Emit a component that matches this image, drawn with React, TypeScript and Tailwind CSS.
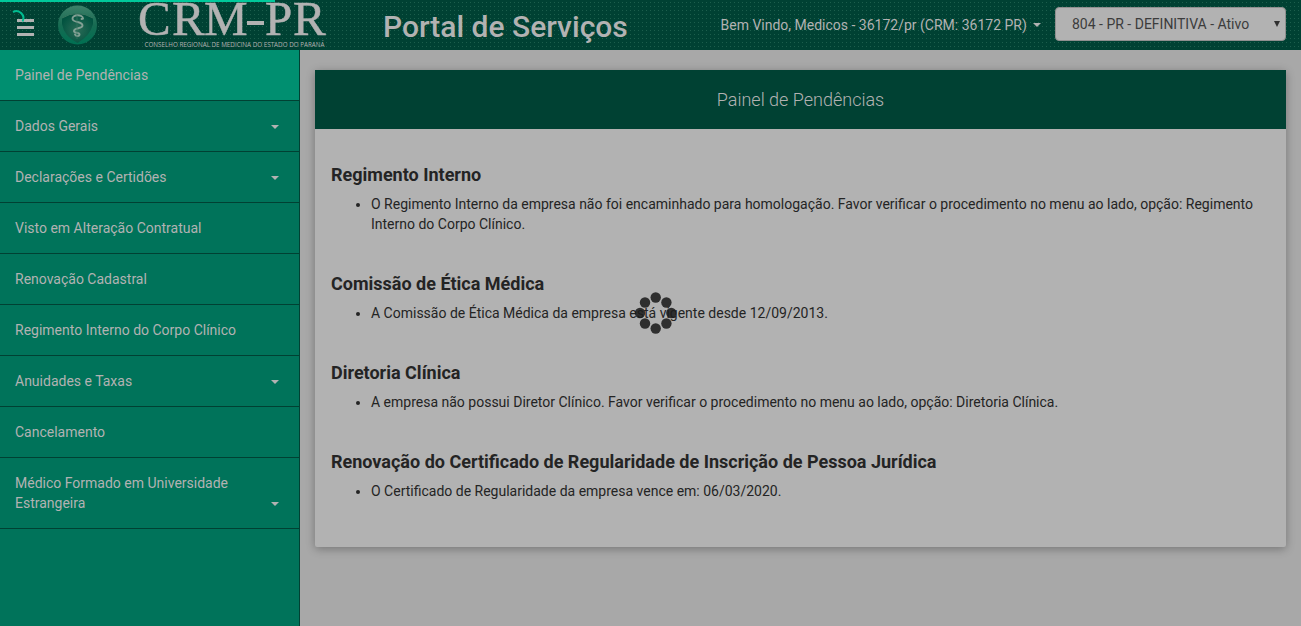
import React from "react";

type MenuItem = { label: string; caret?: boolean; active?: boolean };

const menu: MenuItem[] = [
  { label: "Painel de Pendências", active: true },
  { label: "Dados Gerais", caret: true },
  { label: "Declarações e Certidões", caret: true },
  { label: "Visto em Alteração Contratual" },
  { label: "Renovação Cadastral" },
  { label: "Regimento Interno do Corpo Clínico" },
  { label: "Anuidades e Taxas", caret: true },
  { label: "Cancelamento" },
  { label: "Médico Formado em Universidade Estrangeira", caret: true },
];

const sections = [
  {
    title: "Regimento Interno",
    text: "O Regimento Interno da empresa não foi encaminhado para homologação. Favor verificar o procedimento no menu ao lado, opção: Regimento Interno do Corpo Clínico.",
  },
  { title: "Comissão de Ética Médica", text: "A Comissão de Ética Médica da empresa está vigente desde 12/09/2013." },
  {
    title: "Diretoria Clínica",
    text: "A empresa não possui Diretor Clínico. Favor verificar o procedimento no menu ao lado, opção: Diretoria Clínica.",
  },
  {
    title: "Renovação do Certificado de Regularidade de Inscrição de Pessoa Jurídica",
    text: "O Certificado de Regularidade da empresa vence em: 06/03/2020.",
  },
];

function Caret() {
  return <span className="inline-block h-0 w-0 border-x-4 border-t-4 border-x-transparent border-t-[#b2b2b2]" />;
}

function Seal() {
  return (
    <svg className="ml-[23px] h-10 w-10 shrink-0" viewBox="0 0 40 40">
      <defs>
        <linearGradient id="rim" x1="0" y1="0" x2="0" y2="1">
          <stop offset="0" stopColor="#3d8069" />
          <stop offset=".5" stopColor="#176b52" />
          <stop offset="1" stopColor="#007052" />
        </linearGradient>
        <radialGradient id="core" cx=".5" cy=".55" r=".55">
          <stop offset="0" stopColor="#2b6c57" />
          <stop offset="1" stopColor="#025340" />
        </radialGradient>
      </defs>
      <ellipse cx="20.5" cy="20" rx="19.5" ry="19.5" fill="url(#rim)" />
      <path d="M5 13Q20 4 36 13L36 19Q33 31 20.5 38Q7 31 5 19Z" fill="url(#core)" />
      <path d="M5 13Q20 4 36 13" fill="none" stroke="#37765f" strokeWidth="1" />
      <path
        d="M15.5 14C15 9 26 9 26 13.5L24.5 14M15.5 14C16 18 25.5 16 25.5 20.5C25.5 24 17 22.5 17 26C17 28.5 22.5 27 22.5 29.5C22.5 32 18.5 31 18 29.5"
        fill="none"
        stroke="#83a094"
        strokeWidth="1.9"
        strokeLinecap="round"
      />
      <path d="M20 10V34" stroke="#3b7563" strokeWidth=".7" />
    </svg>
  );
}

function Logo() {
  return (
    <svg className="ml-[41px] h-[50px] w-[190px] shrink-0 overflow-visible" viewBox="0 0 190 50" fill="#b2b2b2">
      <text y="35.3" fontSize="49" stroke="#b2b2b2" strokeWidth=".5" className="font-['Liberation_Serif',serif]">
        <tspan x="0">C</tspan>
        <tspan x="34">R</tspan>
        <tspan x="66">M</tspan>
        <tspan x="127">P</tspan>
        <tspan x="155">R</tspan>
      </text>
      <rect x="109" y="21" width="17" height="4" />
      <text x="6.5" y="47" fontSize="6.5" textLength="180" lengthAdjust="spacingAndGlyphs" className="font-['Open_Sans',sans-serif]">
        CONSELHO REGIONAL DE MEDICINA DO ESTADO DO PARANÁ
      </text>
    </svg>
  );
}

export default function App() {
  return (
    <div className="relative flex h-[626px] flex-col overflow-hidden bg-[#a8a8a8] font-['Roboto',sans-serif] text-sm leading-5 text-[#242424]">
      <header className="flex h-[50px] shrink-0 items-center bg-[#004133] bg-[linear-gradient(90deg,#004133_3px,transparent_3px),linear-gradient(#004133_3px,#1c5e4c_3px)] bg-[size:4px_4px] bg-[position:-1px_-1px] text-[#b2b2b2]">
        <div className="ml-[17px] flex w-[17px] flex-col gap-1 pt-1">
          <span className="h-[3px] bg-[#b2b2b2]" />
          <span className="h-[3px] bg-[#b2b2b2]" />
          <span className="h-[3px] bg-[#b2b2b2]" />
        </div>
        <Seal />
        <Logo />
        <h1 className="ml-[55px] w-[337.5px] shrink-0 pt-[2px] text-[30px] leading-[33px] font-medium">Portal de Serviços</h1>
        <div className="flex shrink-0 items-center gap-[6px]">
          <span>Bem Vindo, Medicos - 36172/pr (CRM: 36172 PR)</span>
          <Caret />
        </div>
        <div className="mr-[15px] mb-[2px] ml-auto flex h-[34px] w-[231px] items-center justify-between rounded border border-[#8f8f8f] bg-[#b2b2b2] pr-[5px] pl-4 text-[#3c3c3c]">
          <span>804 - PR - DEFINITIVA - Ativo</span>
          <svg className="h-[6px] w-[6px]" viewBox="0 0 6 6" fill="#303030"><path d="M0 0H6L3 6Z" /></svg>
        </div>
      </header>
      <div className="flex min-h-0 flex-1">
        <nav className="w-[300px] shrink-0 border-r border-[#004133] bg-[#00735a] text-[#b2b2b2]">
          {menu.map((m) => (
            <div
              key={m.label}
              className={`flex items-end justify-between border-b border-[#004133] py-[15px] pr-5 pl-[15px] ${m.active ? "bg-[#008f70]" : ""}`}
            >
              <span className="max-w-[230px]">{m.label}</span>
              {m.caret && <span className="flex h-[18px] items-center"><Caret /></span>}
            </div>
          ))}
        </nav>
        <main className="flex-1 pt-5 pr-[15px] pl-[15px]">
          <section className="h-[477px] rounded-[2px] bg-[#b2b2b2] shadow-[0_2px_10px_rgba(0,0,0,0.3)]">
            <h2 className="flex h-[59px] items-center justify-center bg-[#004133] text-lg font-light text-[#b2b2b2]">Painel de Pendências</h2>
            <div className="px-4 pt-9">
              {sections.map((s) => (
                <div key={s.title} className="mb-10">
                  <h3 className="mb-[9px] text-lg leading-5 font-bold">{s.title}</h3>
                  <ul className="list-disc pl-10">
                    <li>{s.text}</li>
                  </ul>
                </div>
              ))}
            </div>
          </section>
        </main>
      </div>
      <div className="absolute top-0 left-0 h-[2px] w-[275px] bg-[#00c99b]" />
      <svg className="absolute top-[8px] left-[10px] h-[18px] w-[18px]" viewBox="0 0 18 18" fill="none" stroke="#00bd91" strokeWidth="2">
        <path d="M3 4A7 7 0 0 1 12.5 13.5" />
      </svg>
      <svg className="absolute top-[291px] left-[634px] h-11 w-11" viewBox="0 0 44 44" fill="#1c1c1c" fillOpacity=".88">
        <circle cx="21.7" cy="6.5" r="5.2" />
        <circle cx="32.4" cy="11.5" r="5.2" />
        <circle cx="37.3" cy="22" r="5.2" />
        <circle cx="32.4" cy="32.5" r="5.2" />
        <circle cx="21.7" cy="37.5" r="5.2" />
        <circle cx="11" cy="32.5" r="5.2" />
        <circle cx="6" cy="22" r="5.2" />
        <circle cx="11" cy="11.5" r="5.2" />
      </svg>
    </div>
  );
}
